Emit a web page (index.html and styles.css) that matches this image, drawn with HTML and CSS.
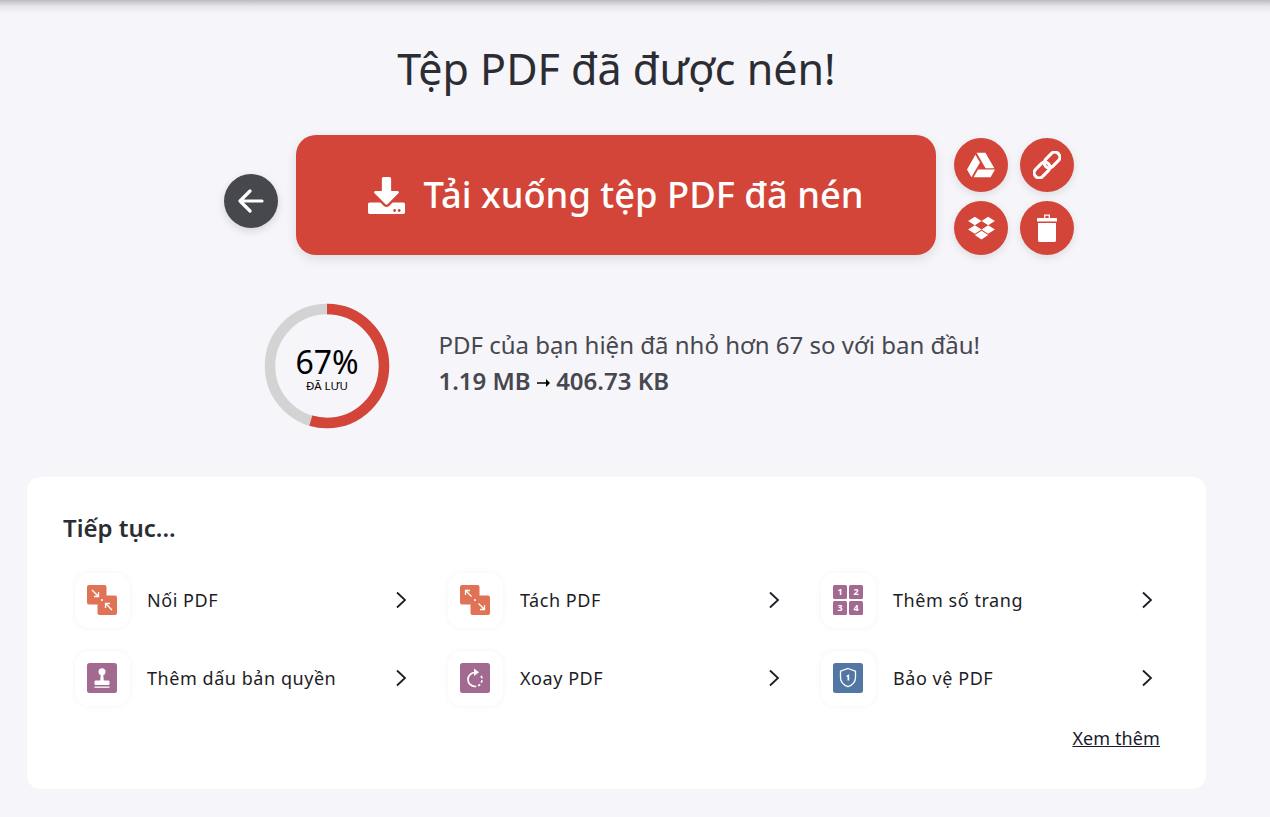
FILE: index.html
```html
<!DOCTYPE html>
<html lang="vi">
  <head>
    <meta charset="UTF-8" />
    <title>Tệp PDF đã được nén!</title>
    <link rel="stylesheet" href="styles.css">
  </head>
  <body>
    <div class="top-shadow"></div>
    <div class="page">
      <h1 class="title">Tệp PDF đã được nén!</h1>

      <div class="actions">
        <a class="back-btn">
          <svg width="26" height="24" viewBox="0 0 26 24" fill="none" stroke="#fff" stroke-width="3.2" stroke-linecap="round" stroke-linejoin="round"><path d="M2 12h22M12 2 2 12l10 10"/></svg>
        </a>
        <a class="download-btn">
          <svg class="download-icon" viewBox="0 0 512 512" fill="#fff"><path d="M216 0h80c13.3 0 24 10.7 24 24v168h87.7c17.8 0 26.7 21.5 14.1 34.1L269.7 378.3c-7.5 7.5-19.8 7.5-27.3 0L90.1 226.1c-12.6-12.6-3.7-34.1 14.1-34.1H192V24c0-13.3 10.7-24 24-24zm296 376v112c0 13.3-10.7 24-24 24H24c-13.3 0-24-10.7-24-24V376c0-13.3 10.7-24 24-24h146.7l49 49c20.1 20.1 52.5 20.1 72.6 0l49-49H488c13.3 0 24 10.7 24 24zm-124 88c0-11-9-20-20-20s-20 9-20 20 9 20 20 20 20-9 20-20zm64 0c0-11-9-20-20-20s-20 9-20 20 9 20 20 20 20-9 20-20z"/></svg>
          <span class="download-text">Tải xuống tệp PDF đã nén</span>
        </a>
        <div class="side-btns">
          <a class="round-btn">
            <svg width="28" height="28" viewBox="0 0 512 512" fill="#fff"><path d="M339 314.9L175.4 32h161.2l163.6 282.9H339zm-137.5 23.6L120.9 480h310.5L512 338.5H201.5zM154.1 67.4L0 338.5 80.6 480 237 208.8 154.1 67.4z"/></svg>
          </a>
          <a class="round-btn">
            <svg width="28" height="28" viewBox="0 0 28 28" fill="none" stroke="#fff" stroke-width="3.100">
              <rect x="10" y="4" width="18" height="10" rx="5" transform="rotate(-45 19 9)"/>
              <rect x="0" y="14" width="18" height="10" rx="5" transform="rotate(-45 9 19)"/>
            </svg>
          </a>
          <a class="round-btn">
            <svg width="27" height="26" viewBox="0 0 528 512" fill="#fff"><path d="M264.4 116.3l-132 84.3 132 84.3-132 84.3L0 284.1l132.3-84.3L0 116.3 132.3 32l132.1 84.3zM131.6 395.7l132-84.3 132 84.3-132 84.3-132-84.3zm132.8-111l132-84.3-132-83.6L395.7 32 528 116.3l-132.3 84.3L528 284.8l-132.3 84.3-131.3-84.4z"/></svg>
          </a>
          <a class="round-btn">
            <svg width="20" height="28" viewBox="0 0 20 28" fill="#fff"><path d="M7.7 4V1.200h4.600V4" fill="none" stroke="#fff" stroke-width="1.300"/><rect y="4" width="20" height="3.600" rx=".6"/><path d="M1 9h18v17.600c0 .8-.6 1.400-1.400 1.400H2.400C1.600 28 1 27.400 1 26.600z"/></svg>
          </a>
        </div>
      </div>

      <div class="stats">
        <div class="ring">
          <svg width="126" height="126" viewBox="0 0 126 126" fill="none" stroke-width="10.500">
            <circle cx="63" cy="63" r="57" stroke="#d3d3d3"/>
            <circle class="ring-value" cx="63" cy="63" r="57" stroke="#d34539" pathLength="100" stroke-dasharray="54.600 100"/>
          </svg>
          <div class="ring-text">
            <div class="ring-percent">67%</div>
            <div class="ring-label">ĐÃ LƯU</div>
          </div>
        </div>
        <div class="stats-text">
          <div class="stats-line">PDF của bạn hiện đã nhỏ hơn 67 so với ban đầu!</div>
          <div class="stats-size">
            1.19 MB
            <svg width="13" height="8" viewBox="0 0 13 8"><path d="M0 3.200h9V0l4 4-4 4V4.800H0z" fill="#000"/></svg>
            406.73 KB
          </div>
        </div>
      </div>

      <div class="card">
        <div class="card-title">Tiếp tục...</div>
        <div class="tools">
          <a class="tool">
            <span class="tool-icon">
              <svg width="30" height="30" viewBox="0 0 30 30">
                <rect width="19.500" height="19.500" rx="2" fill="#e07356"/>
                <rect x="10.500" y="10.500" width="19.500" height="19.500" rx="2" fill="#e07356"/>
                <path d="M5 5l6.500 6.500M11.500 7v4.500H7M25 25l-6.500-6.500M18.500 23v-4.500H23" fill="none" stroke="#fff" stroke-width="1.300"/>
                <circle cx="15" cy="15" r="1.100" fill="#fff"/>
              </svg>
            </span>
            <span class="tool-name">Nối PDF</span>
            <svg class="chevron" width="12" height="18" viewBox="0 0 12 18" fill="none" stroke="#1d1d25" stroke-width="1.800"><path d="M2 1.500 10 9l-8 7.500"/></svg>
          </a>
          <a class="tool">
            <span class="tool-icon">
              <svg width="30" height="30" viewBox="0 0 30 30">
                <rect width="19.500" height="19.500" rx="2" fill="#e07356"/>
                <rect x="10.500" y="10.500" width="19.500" height="19.500" rx="2" fill="#e07356"/>
                <path d="M5.500 5.500 11.500 11.500M5.500 10V5.500H10M24.500 24.500l-6-6M24.500 20v4.500H20" fill="none" stroke="#fff" stroke-width="1.300"/>
                <circle cx="15" cy="15" r="1.100" fill="#fff"/>
              </svg>
            </span>
            <span class="tool-name">Tách PDF</span>
            <svg class="chevron" width="12" height="18" viewBox="0 0 12 18" fill="none" stroke="#1d1d25" stroke-width="1.800"><path d="M2 1.500 10 9l-8 7.500"/></svg>
          </a>
          <a class="tool">
            <span class="tool-icon">
              <svg width="30" height="30" viewBox="0 0 30 30" class="num-icon">
                <rect width="14" height="14" rx="1.500"/>
                <rect x="16" width="14" height="14" rx="1.500"/>
                <rect y="16" width="14" height="14" rx="1.500"/>
                <rect x="16" y="16" width="14" height="14" rx="1.500"/>
                <text x="7" y="10">1</text>
                <text x="23" y="10">2</text>
                <text x="7" y="26">3</text>
                <text x="23" y="26">4</text>
              </svg>
            </span>
            <span class="tool-name">Thêm số trang</span>
            <svg class="chevron" width="12" height="18" viewBox="0 0 12 18" fill="none" stroke="#1d1d25" stroke-width="1.800"><path d="M2 1.500 10 9l-8 7.500"/></svg>
          </a>
          <a class="tool">
            <span class="tool-icon">
              <svg width="30" height="30" viewBox="0 0 30 30">
                <rect width="30" height="30" rx="2.500" fill="#a26a90"/>
                <circle cx="15" cy="8.700" r="3.500" fill="#fff"/>
                <path d="M13.800 11h2.400l.6 7h-3.600z" fill="#fff"/>
                <rect x="7.500" y="17.500" width="15" height="4.500" rx="1" fill="#fff"/>
                <rect x="7.500" y="23.500" width="15" height="1.300" fill="#fff"/>
              </svg>
            </span>
            <span class="tool-name">Thêm dấu bản quyền</span>
            <svg class="chevron" width="12" height="18" viewBox="0 0 12 18" fill="none" stroke="#1d1d25" stroke-width="1.800"><path d="M2 1.500 10 9l-8 7.500"/></svg>
          </a>
          <a class="tool">
            <span class="tool-icon">
              <svg width="30" height="30" viewBox="0 0 30 30">
                <rect width="30" height="30" rx="2.500" fill="#a26a90"/>
                <path d="M15 9.500A7 7 0 1 0 22 16.500A7 7 0 0 0 20 11.500" fill="none" stroke="#fff" stroke-width="1.700" stroke-dasharray="23 2 2.500 2 2.500 2 2.500"/>
                <path d="M14 5.500l5 3.700-5 3.700z" fill="#fff"/>
              </svg>
            </span>
            <span class="tool-name">Xoay PDF</span>
            <svg class="chevron" width="12" height="18" viewBox="0 0 12 18" fill="none" stroke="#1d1d25" stroke-width="1.800"><path d="M2 1.500 10 9l-8 7.500"/></svg>
          </a>
          <a class="tool">
            <span class="tool-icon">
              <svg width="30" height="30" viewBox="0 0 30 30">
                <rect width="30" height="30" rx="2.500" fill="#5277a5"/>
                <path d="M15 5.500l7.500 2.700v6c0 4.500-3.100 7.800-7.500 9.500-4.400-1.700-7.500-5-7.500-9.500v-6z" fill="none" stroke="#fff" stroke-width="1.300"/>
                <path d="M13.500 12.800l2-1.300h.7v6h-1.700v-4l-1 .6z" fill="#fff"/>
              </svg>
            </span>
            <span class="tool-name">Bảo vệ PDF</span>
            <svg class="chevron" width="12" height="18" viewBox="0 0 12 18" fill="none" stroke="#1d1d25" stroke-width="1.800"><path d="M2 1.500 10 9l-8 7.500"/></svg>
          </a>
        </div>
        <div class="more-row"><a class="more-link">Xem thêm</a></div>
      </div>
    </div>
  </body>
</html>
```

FILE: styles.css
```css
body {
  margin: 0;
  background: #f5f5fa;
  font-family: "Noto Sans", "Open Sans", Arial, sans-serif;
  color: #2c2c33;
}
.top-shadow {
  height: 14px;
  background: linear-gradient(180deg, #bcbcc2 0%, #e6e6ec 45%, #f5f5fa 100%);
}
.page {
  width: 1179px;
  margin-left: 27px;
}
.title {
  margin: 0;
  padding-top: 25px;
  height: 96px;
  box-sizing: border-box;
  text-align: center;
  font-size: 43px;
  line-height: 60px;
  font-weight: 400;
}
.actions {
  margin-top: 25px;
  display: flex;
  align-items: center;
  gap: 18px;
  padding-left: 197px;
}
.back-btn {
  width: 54px;
  height: 54px;
  margin-top: 12px;
  border-radius: 50%;
  background: #47484d;
  display: flex;
  align-items: center;
  justify-content: center;
  box-shadow: 0 3px 8px #0002;
}
.download-btn {
  width: 640px;
  height: 120px;
  border-radius: 20px;
  background: #d34539;
  color: #fff;
  display: flex;
  align-items: center;
  justify-content: center;
  gap: 18px;
  font-size: 36.3px;
  font-weight: 500;
  box-shadow: 0 4px 12px #0000001a;
}
.download-text {
  padding-bottom: 3px;
}
.download-icon {
  width: 37px;
  height: 37px;
}
.side-btns {
  display: grid;
  grid-template-columns: 54px 54px;
  grid-auto-rows: 54px;
  column-gap: 12px;
  row-gap: 9px;
  align-self: flex-end;
}
.round-btn {
  border-radius: 50%;
  background: #d34539;
  display: flex;
  align-items: center;
  justify-content: center;
  box-shadow: 0 3px 8px #0000001a;
}
.stats {
  margin-top: 48px;
  padding-left: 237px;
  display: flex;
  align-items: center;
  gap: 48.5px;
}
.ring {
  position: relative;
  width: 126px;
  height: 126px;
}
.ring-value {
  transform: rotate(-90deg);
  transform-origin: 63px 63px;
}
.ring-text {
  position: absolute;
  inset: 0;
  display: flex;
  flex-direction: column;
  align-items: center;
  justify-content: center;
  color: #000;
}
.ring-percent {
  font-size: 32px;
  line-height: 30px;
  margin-top: 6px;
}
.ring-label {
  font-size: 11.500px;
  line-height: 12px;
  margin-top: 3px;
}
.stats-text {
  color: #47474f;
  font-size: 24px;
  line-height: 37px;
  padding-bottom: 7px;
}
.stats-size {
  font-weight: 600;
  margin-top: -1px;
}
.stats-size svg {
  vertical-align: 3px;
}
.card {
  margin-top: 48px;
  height: 312px;
  box-sizing: border-box;
  background: #fff;
  border-radius: 14px;
  padding: 34px 36px 0;
}
.card-title {
  font-size: 24px;
  line-height: 34px;
  font-weight: 600;
}
.tools {
  margin-top: 28px;
  display: grid;
  grid-template-columns: repeat(3, 373px);
  row-gap: 23px;
}
.tool {
  display: flex;
  align-items: center;
  padding-left: 12px;
  width: 344px;
  box-sizing: border-box;
}
.tool-icon {
  width: 55px;
  height: 55px;
  flex-shrink: 0;
  padding: 0 1px 1px 0;
  box-sizing: border-box;
  border-radius: 14px;
  background: #fff;
  display: flex;
  align-items: center;
  justify-content: center;
  box-shadow: 0 0 6px #0000000d;
}
.tool-name {
  margin-left: 17px;
  padding-bottom: 2px;
  font-size: 18px;
  letter-spacing: 0.55px;
  flex: 1;
  color: #1d1d25;
}
.chevron {
  margin-bottom: 1px;
}
.num-icon rect {
  fill: #a26a90;
}
.num-icon text {
  fill: #fff;
  font-size: 9px;
  font-weight: 700;
  text-anchor: middle;
}
.more-row {
  margin-top: 17px;
  text-align: right;
  padding-right: 10px;
}
.more-link {
  font-size: 18px;
  letter-spacing: 0.1px;
  line-height: 30px;
  color: #1a1a2e;
  text-decoration: underline;
}
```
